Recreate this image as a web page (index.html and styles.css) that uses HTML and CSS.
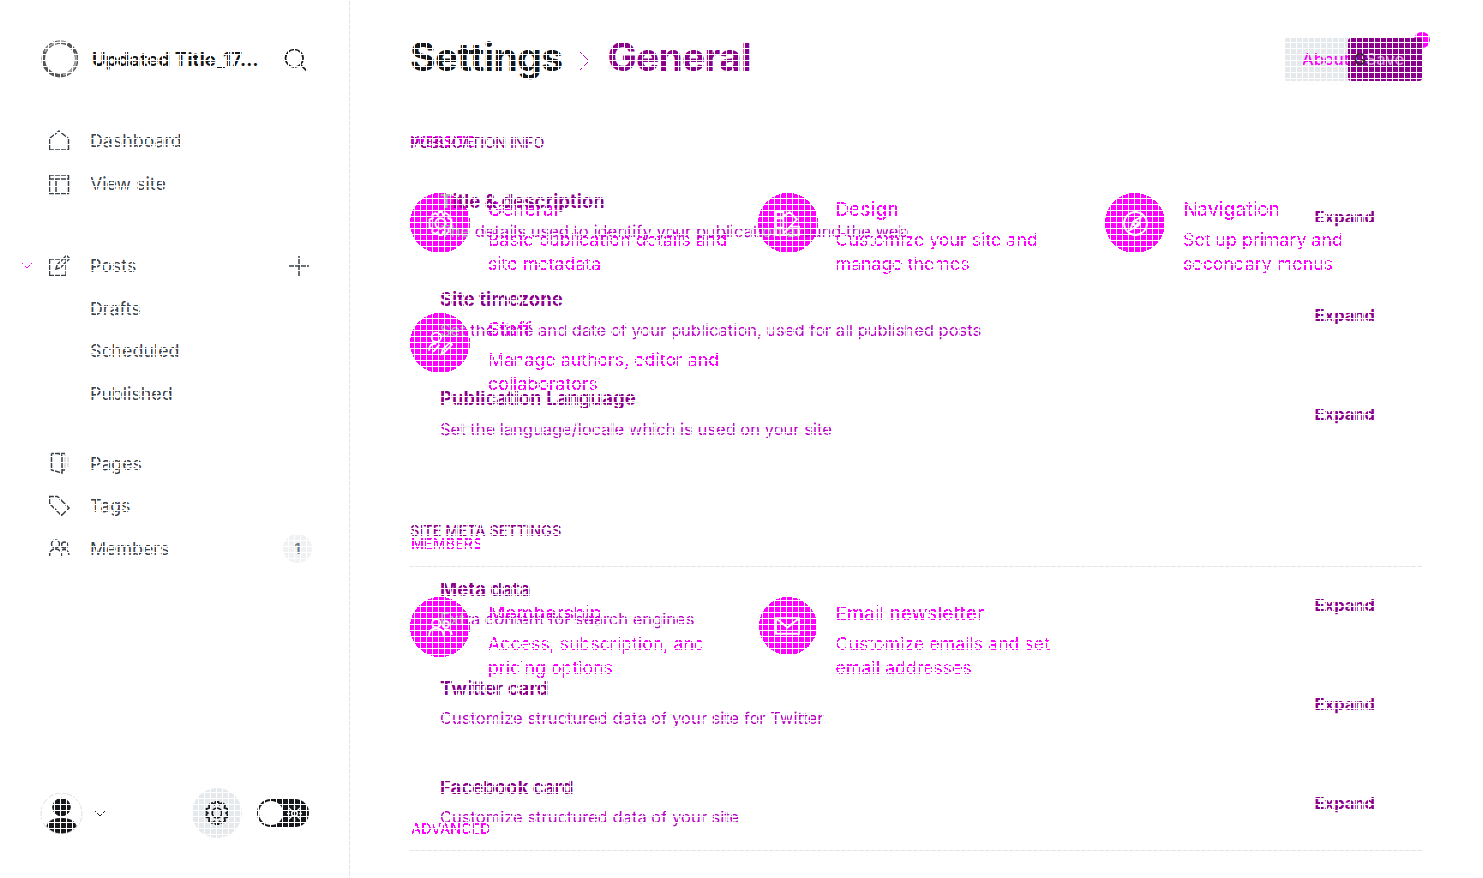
FILE: index.html
```html
<!DOCTYPE html>
<html lang="en">
<head>
<meta charset="utf-8">
<title>Settings - General</title>
<link rel="stylesheet" href="styles.css">
</head>
<body>
<svg class="defs" width="0" height="0"><filter id="crisp" x="0" y="0" width="100%" height="100%" color-interpolation-filters="sRGB"><feComponentTransfer><feFuncA type="discrete" tableValues="0 1"/></feComponentTransfer></filter></svg>
<div class="app">
<aside class="sidebar">
  <header class="brand">
    <svg class="logo" viewBox="0 0 40 40"><circle cx="20" cy="20" r="16.7" fill="none" stroke="#555" stroke-width="3.6"/><path d="M5 13C8 5 19 1 28 4M35 14c4 10-2 19-12 22" fill="none" stroke="#aaa" stroke-width="2"/></svg>
    <span class="brand-name">Updated Title_17…</span>
    <svg class="search" viewBox="0 0 24 24"><circle cx="10.3" cy="10.3" r="8.8"/><path d="m16.8 16.8 6 6"/></svg>
  </header>
  <nav class="nav">
    <a class="row"><svg viewBox="0 0 24 24"><path d="M2.5 9.5 12 2l9.500 7.500V21h-19z"/></svg>Dashboard</a>
    <a class="row"><svg viewBox="0 0 24 24"><path d="M2.500 3h19v18.500h-19zM2.500 7h19M9 7v14.500"/></svg>View site</a>
  </nav>
  <nav class="nav posts">
    <a class="row"><svg class="caret" viewBox="0 0 12 8"><path d="m1 1 5 5 5-5"/></svg><svg viewBox="0 0 24 24"><path d="M13 5H2.500v16.500H19V11M9 15l1-4L19.500 1.500l3 3L13 14zM17 4l3 3"/></svg>Posts<svg class="plus" viewBox="0 0 22 22"><path d="M11 1v20M1 11h20"/></svg></a>
    <a class="row sub">Drafts</a>
    <a class="row sub">Scheduled</a>
    <a class="row sub">Published</a>
  </nav>
  <nav class="nav library">
    <a class="row"><svg viewBox="0 0 24 24"><path d="M4.500 2.500H18M4.500 2.500V19l10.500 3V6q0-3-5-3.500M15 19h3"/><path class="pale" d="M18 3v16M21 5v11"/></svg>Pages</a>
    <a class="row"><svg viewBox="0 0 24 24"><path d="M2.500 2.500h8L22 14l-7.500 7.500-12-12z"/></svg>Tags</a>
    <a class="row"><svg viewBox="0 0 24 24"><circle cx="8.500" cy="8" r="4"/><circle cx="17.500" cy="9" r="3"/><path d="M2.500 20q0-7 6-7t6 7M15 14q6-2 7 5"/></svg>Members<span class="count">1</span></a>
  </nav>
  <footer class="tools">
    <svg class="avatar" viewBox="0 0 44 44"><circle cx="22" cy="22" r="21" fill="none" stroke="#ddd"/><circle cx="22" cy="15.500" r="9" fill="#15171a"/><path d="M7 35q2-8 15-8t15 8q-6 7-15 7T7 35" fill="#15171a"/></svg>
    <svg class="down" viewBox="0 0 14 9"><path d="m1 1 6 6 6-6"/></svg>
    <span class="gear"><svg viewBox="0 0 24 24"><circle cx="12" cy="12" r="4.800"/><path d="m9.500 3.500 1-2.500h3l1 2.500 2.500-1.500 3 2-.5 3 3 1v3q-3 1 0 2v3l-3 1 .5 3-3 2-2.500-1.500-1 2.500h-3l-1-2.500L7 22l-3-2 .5-3-3-1v-3q3-1 0-2V8l3-1L4 4l3-2z"/></svg></span>
    <span class="toggle"><span class="knob"></span><svg viewBox="0 0 16 16"><circle cx="8" cy="8" r="3"/><path d="M8 0v3M8 13v3M0 8h3M13 8h3M2 2l3 3M11 11l3 3M14 2l-3 3M5 11l-3 3"/></svg></span>
  </footer>
</aside>
<main class="main">
  <header class="top">
    <h1><span>Settings</span><svg viewBox="0 0 12 20"><path d="m1 1 9 9-9 9"/></svg><span class="current">General</span></h1>
    <div class="actions"><span class="about">About <span class="behind">G</span></span><span class="save">Save</span><i class="dot"></i></div>
  </header>
  <div class="stage">
    <section class="overview">
      <h2>WEBSITE</h2>
      <div class="cards">
        <article><span class="disc"><svg viewBox="0 0 24 24"><circle cx="12" cy="12" r="5"/><path d="m9.500 4 1-3h3l1 3L17 2l3 2-.5 3 3 1v8l-3 1 .5 3-3 2-2.500-2-1 3h-3l-1-3L7 22l-3-2 .5-3-3-1V8l3-1L4 4l3-2z"/></svg></span><div><h3>General</h3><p>Basic publication details and<br>site metadata</p></div></article>
        <article><span class="disc"><svg viewBox="0 0 24 24"><path d="M1 1h7v22H1zM1 7h7M1 16h7M8 5l6-4 7 7L8 22M14 15h9v8H8"/></svg></span><div><h3>Design</h3><p>Customize your site and<br>manage themes</p></div></article>
        <article><span class="disc"><svg viewBox="0 0 24 24"><circle cx="12" cy="12" r="11"/><path d="m17 6-2 8-8 4 3-8z"/><circle cx="12" cy="12" r="2"/></svg></span><div><h3>Navigation</h3><p>Set up primary and<br>secondary menus</p></div></article>
        <article><span class="disc"><svg viewBox="0 0 24 24"><circle cx="8" cy="6" r="4.500"/><path d="M1 19q0-7 7-7M13 22l1-4 7-7 2 2-7 7zM5 20l6-7"/></svg></span><div><h3>Staff</h3><p>Manage authors, editor and<br>collaborators</p></div></article>
      </div>
      <h2 class="members-title">MEMBERS</h2>
      <div class="cards members">
        <article><span class="disc"><svg viewBox="0 0 24 24"><circle cx="8" cy="8" r="4"/><circle cx="17" cy="9" r="3"/><path d="M1 20q0-7 7-7t7 7M16 14q6-1 7 5"/></svg></span><div><h3>Membership</h3><p>Access, subscription, and<br>pricing options</p></div></article>
        <article><span class="disc mail"><svg viewBox="0 0 24 24"><path d="M1 4h22v15H1zM1 4l11 9 11-9"/></svg></span><div><h3>Email newsletter</h3><p>Customize emails and set<br>email addresses</p></div></article>
      </div>
      <h2 class="advanced-title">ADVANCED</h2>
    </section>
    <section class="details">
      <h2>PUBLICATION INFO</h2>
      <div class="items">
        <div class="item"><div><h4><span class="over">T</span>itle &amp; description</h4><p><span class="over">The</span> details used to identify your publicati<span class="over">on ar</span>ound the web</p></div><b>Expand</b></div>
        <div class="item"><div><h4>Site timezone</h4><p><span class="over">Set</span> the time and date of your publication, used for all published posts</p></div><b>Expand</b></div>
        <div class="item"><div><h4>Publication Language</h4><p>Set the language/locale which is used on your site</p></div><b>Expand</b></div>
      </div>
      <h2 class="meta-title">SITE META SETTINGS</h2>
      <div class="items meta">
        <div class="item"><div><h4>Meta data</h4><p><span class="over">Ext</span>ra content for search engines</p></div><b>Expand</b></div>
        <div class="item"><div><h4>Twitter card</h4><p>Customize structured data of your site for Twitter</p></div><b>Expand</b></div>
        <div class="item"><div><h4>Facebook card</h4><p>Customize structured data of your site</p></div><b>Expand</b></div>
      </div>
    </section>
  </div>
</main>
</div>
<div class="grid"></div>
</body>
</html>
```
FILE: styles.css
```css
* { box-sizing: border-box; margin: 0; padding: 0; }
body { width: 1483px; height: 878px; overflow: hidden; background: #fff; font-family: Inter, "Liberation Sans", sans-serif; color: #15171a; }
svg { fill: none; stroke: currentColor; flex: none; }
.defs { position: absolute; }
.app { display: flex; height: 878px; }
.sidebar { flex: none; width: 350px; border-right: 1px solid #e3e5e8; display: flex; flex-direction: column; padding: 39px 0 40px; }
.brand { display: flex; align-items: center; height: 40px; padding-left: 40px; }
.logo { width: 40px; height: 40px; }
.brand-name { font-size: 18.500px; font-weight: 700; margin-left: 12px; width: 192px; white-space: nowrap; letter-spacing: .2px; }
.search { width: 24px; height: 24px; margin-top: 1px; stroke-width: 1.7; }
.nav { padding-top: 40.7px; }
.posts { padding-top: 39.500px; }
.library { padding-top: 27.200px; }
.row { display: flex; align-items: center; height: 42.600px; padding-left: 47px; font-size: 17.800px; color: #394047; position: relative; }
.row svg { width: 24px; height: 24px; margin-right: 19px; stroke-width: 1.5; }
.row .caret { position: absolute; left: 21px; width: 12px; height: 8px; color: #f0f; margin: 0; stroke-width: 1.1; filter: url(#crisp); }
.row .plus { width: 22px; height: 22px; margin: 0 39px 0 auto; }
.pale { opacity: .2; }
.sub { padding-left: 90px; }
.count { margin-left: auto; margin-right: 37px; width: 29px; height: 29px; border-radius: 50%; background: #eff1f3; color: #6c7886; display: grid; place-items: center; font-size: 15px; font-weight: 600; }
.tools { display: flex; align-items: center; height: 50px; margin-top: auto; padding-left: 40px; }
.avatar { width: 43px; height: 43px; }
.down { width: 14px; height: 9px; margin-left: 10px; margin-right: 1px; }
.gear { width: 50px; height: 50px; border-radius: 50%; background: #e6e9eb; margin-left: 84px; display: grid; place-items: center; }
.gear svg { width: 24px; height: 26px; stroke-width: 1.8; }
.toggle { width: 52px; height: 28px; border-radius: 14px; background: #15171a; margin-left: 15px; display: flex; align-items: center; padding: 2px; }
.knob { width: 24px; height: 24px; border-radius: 50%; background: #fff; }
.toggle svg { width: 15px; height: 15px; color: #fff; margin-left: 4px; stroke-width: 1.5; }
.main { flex: 1; min-width: 0; padding: 37px 61px 0 60px; }
.top { display: flex; justify-content: space-between; height: 44px; }
h1 { display: flex; align-items: center; height: 40px; font-size: 39px; line-height: 40px; font-weight: 700; letter-spacing: -.6px; }
h1 svg { width: 12px; height: 20px; margin: 8px 17px 0 16px; color: #c000c8; stroke-width: 1.2; filter: url(#crisp); }
.current { color: #8b008b; letter-spacing: -.75px; }
.actions { position: relative; display: flex; margin-top: 1px; height: 43px; font-size: 16.500px; font-weight: 500; line-height: 43px; }
.about { width: 64px; padding-left: 18px; background: #e6e9eb; color: #f0f; border-radius: 3px 0 0 3px; white-space: nowrap; }
.behind { color: #3a203a; position: relative; z-index: 1; }
.save { width: 74px; background: #8b008b; border-radius: 3px; color: #d890d8; text-align: center; }
.dot { position: absolute; right: -8px; top: -6px; width: 16px; height: 16px; background: #f0f; border-radius: 50%; z-index: -1; }
.stage { display: grid; grid-template-columns: minmax(0, 1fr); padding-top: 46px; }
.overview, .details { grid-area: 1 / 1; }
h2 { font-size: 14.300px; line-height: 20px; font-weight: 500; height: 20px; padding-left: 1px; white-space: nowrap; }
.overview { color: #f0f; filter: url(#crisp); padding-top: 5px; height: 751px; }
.cards { display: grid; grid-template-columns: repeat(3, 347.500px); grid-auto-rows: 60px; row-gap: 60px; padding-top: 41px; }
article { display: flex; }
.disc { width: 60px; height: 60px; border-radius: 50%; background: #f0f; color: #fff; display: grid; place-items: center; flex: none; }
.disc svg { width: 25px; height: 25px; stroke-width: 1.8; }
.mail { width: 58px; height: 58px; margin: 0 1px; }
article > div { padding: 5px 0 0 18px; white-space: nowrap; }
h3 { font-size: 19px; line-height: 24px; font-weight: 550; height: 30px; }
article p { font-size: 17.750px; line-height: 24px; }
.members-title { margin-top: 161px; height: 32px; }
.cards.members { border-top: 1px solid #e5e5e5; padding-top: 30px; }
.advanced-title { margin-top: 162px; height: 32px; border-bottom: 1px solid #e5e5e5; }
.details { color: #8b008b; position: relative; padding-top: 6px; }
.details h2 { font-size: 14.450px; padding-left: 0; }
.items { padding: 27.500px 47px 0 30px; }
.item { display: flex; justify-content: space-between; height: 98.900px; white-space: nowrap; }
h4 { font-size: 18.550px; line-height: 24px; height: 30px; font-weight: 700; padding-top: 8px; }
.item p { font-size: 16.550px; line-height: 24px; padding-top: 8.300px; color: #b800c4; }
.item b { font-size: 16.500px; line-height: 24px; font-weight: 700; padding-top: 24px; }
.item p .over, .over { color: #b0b0b0; }
.meta-title { margin-top: 44.200px; }
.grid { position: absolute; inset: 0; pointer-events: none; background: repeating-linear-gradient(90deg, #fff 0 1px, transparent 1px 6px), repeating-linear-gradient(#fff 0 1px, transparent 1px 6px); }
```
